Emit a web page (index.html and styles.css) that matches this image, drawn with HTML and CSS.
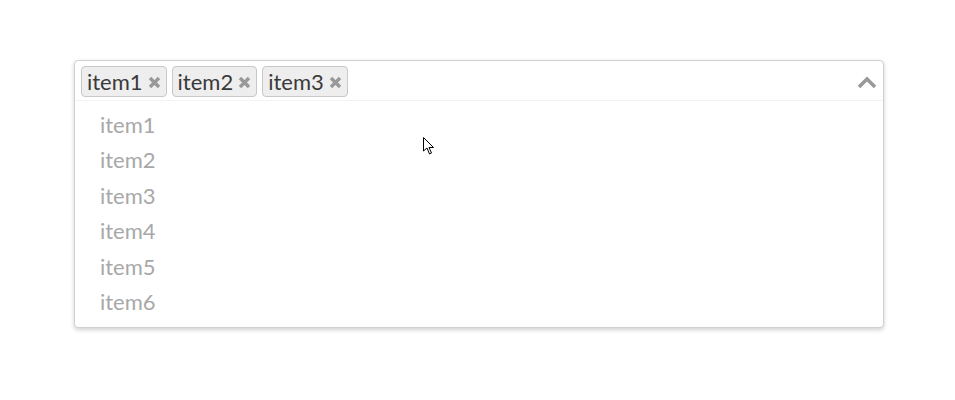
FILE: index.html
```html
<!DOCTYPE html>
<html>
<head>
<meta charset="utf-8">
<link rel="stylesheet" href="styles.css">
</head>
<body>
<div class="page">
  <div class="select">
    <div class="control">
      <div class="tags">
        <span class="tag">item1<svg class="x" width="13" height="13" viewBox="0 0 13 13"><path d="M2 2 L11 11 M11 2 L2 11" stroke="#999" stroke-width="3.4"/></svg></span>
        <span class="tag">item2<svg class="x" width="13" height="13" viewBox="0 0 13 13"><path d="M2 2 L11 11 M11 2 L2 11" stroke="#999" stroke-width="3.4"/></svg></span>
        <span class="tag">item3<svg class="x" width="13" height="13" viewBox="0 0 13 13"><path d="M2 2 L11 11 M11 2 L2 11" stroke="#999" stroke-width="3.4"/></svg></span>
      </div>
      <svg class="chev" width="20" height="14" viewBox="0 0 20 14"><path d="M2 11 L10 3 L18 11" fill="none" stroke="#999" stroke-width="3.6"/></svg>
    </div>
    <ul class="menu">
      <li>item1</li>
      <li>item2</li>
      <li>item3</li>
      <li>item4</li>
      <li>item5</li>
      <li>item6</li>
    </ul>
  </div>
  <svg class="cursor" width="14" height="20" viewBox="0 0 14 20"><path d="M0.5 0.5 L0.5 14 L4 11 L6.5 17 L8.5 16 L6 10.5 L10.5 10.5 Z" fill="#fff" stroke="#000" stroke-width="1"/></svg>
</div>
</body>
</html>
```
FILE: styles.css
```css
html, body { margin: 0; padding: 0; background: #fff; }
body { font-family: Lato, "Open Sans", sans-serif; }
.page { position: relative; width: 955px; height: 400px; padding: 60px 0 0 74px; box-sizing: border-box; }
.select { box-sizing: border-box; width: 810px; border: 1px solid #d0d0d0; border-radius: 4px; box-shadow: 0 2px 4px rgba(0,0,0,0.18); background: #fff; }
.control { display: flex; align-items: center; justify-content: space-between; padding: 5px 6px 3px 6px; border-bottom: 1px solid #f3f3f3; }
.tags { display: flex; gap: 5px; }
.tag { display: inline-flex; align-items: center; box-sizing: border-box; height: 31px; padding: 0 5px 0 5px; border: 1px solid #c8c8c8; border-radius: 4px; background: #eee; color: #3a3a3a; font-size: 22px; line-height: 29px; }
.x { margin-left: 5px; margin-top: 1px; }
.chev { margin-top: 2px; }
.menu { list-style: none; margin: 0; padding: 6px 0 8px 0; }
.menu li { padding-left: 25px; height: 35.4px; line-height: 35.4px; font-size: 22px; color: #a8a8a8; }
.cursor { position: absolute; left: 423px; top: 137px; }
```
